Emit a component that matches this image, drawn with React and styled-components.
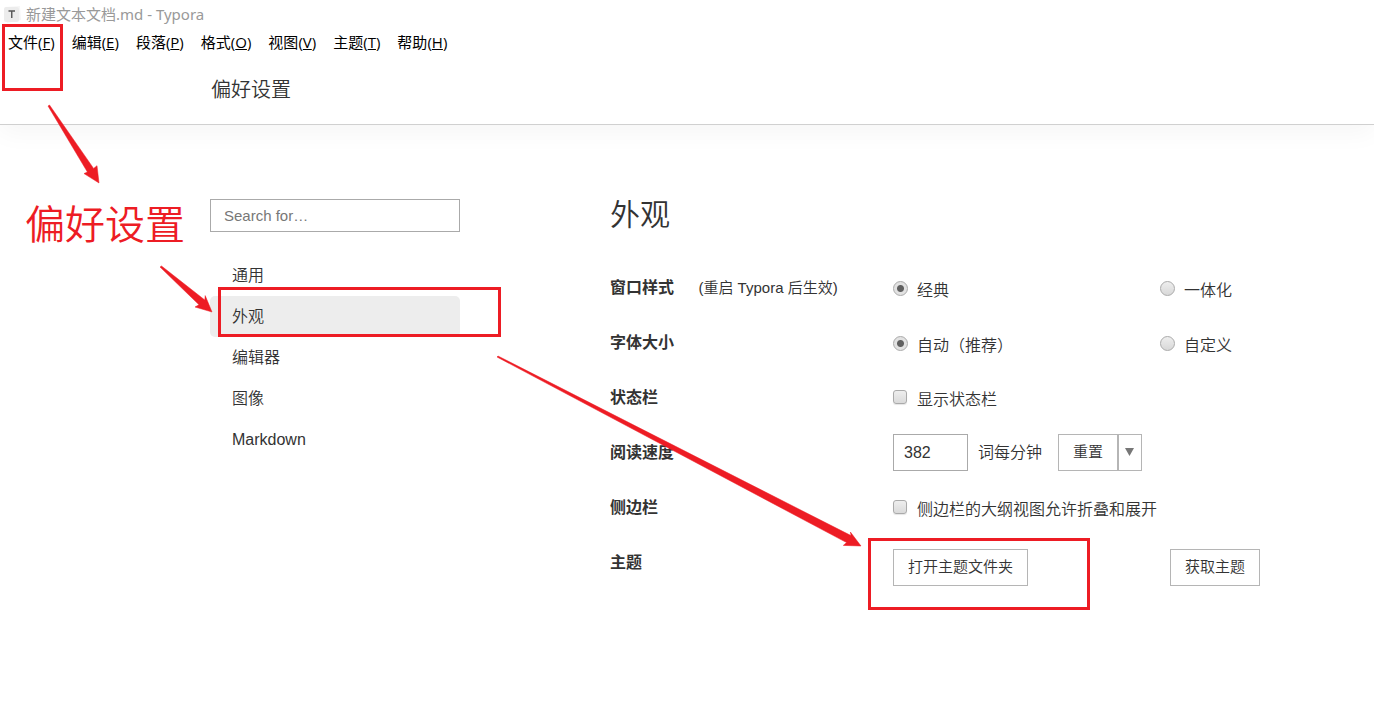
import React from "react";
import styled, { createGlobalStyle } from "styled-components";

const menus = [
  { label: "文件", accessKey: "F" },
  { label: "编辑", accessKey: "E" },
  { label: "段落", accessKey: "P" },
  { label: "格式", accessKey: "O" },
  { label: "视图", accessKey: "V" },
  { label: "主题", accessKey: "T" },
  { label: "帮助", accessKey: "H" },
];

const sections = ["通用", "外观", "编辑器", "图像", "Markdown"];

const App = () => {
  const [section, setSection] = React.useState("外观");

  return (
    <Window>
      <GlobalStyle />
      <Header>
        <TitleBar>
          <AppIcon viewBox="0 0 18 18" aria-hidden="true">
            <path d="M2 2 L17 1 L18 15 L4 18 Z" fill="#f6f6f6" />
            <rect x="1" y="2" width="15" height="15" rx="2" fill="#ececec" />
            <path
              d="M5.5 6 H12 M8.75 6 V13"
              fill="none"
              stroke="#555"
              strokeWidth="1.4"
            />
          </AppIcon>
          <span>新建文本文档.md - Typora</span>
        </TitleBar>
        <MenuBar>
          {menus.map((menu) => (
            <MenuButton key={menu.accessKey} type="button">
              {menu.label}(<u>{menu.accessKey}</u>)
            </MenuButton>
          ))}
        </MenuBar>
        <PageTitle>偏好设置</PageTitle>
      </Header>

      <Body>
        <Sidebar>
          <Search type="text" placeholder="Search for…" aria-label="Search" />
          <Nav>
            {sections.map((name) => (
              <NavLink
                key={name}
                href="#"
                $active={name === section}
                onClick={() => setSection(name)}
              >
                {name}
              </NavLink>
            ))}
          </Nav>
        </Sidebar>

        <Main>
          <Heading>外观</Heading>
          <Row>
            <RowLabel>
              窗口样式 <Hint>(重启 Typora 后生效)</Hint>
            </RowLabel>
            <RadioOption>
              <Radio type="radio" name="windowStyle" defaultChecked />
              <OptionText>经典</OptionText>
            </RadioOption>
            <RadioOption>
              <Radio type="radio" name="windowStyle" />
              <OptionText>一体化</OptionText>
            </RadioOption>
          </Row>
          <Row>
            <RowLabel>字体大小</RowLabel>
            <RadioOption>
              <Radio type="radio" name="fontSize" defaultChecked />
              <OptionText>自动（推荐）</OptionText>
            </RadioOption>
            <RadioOption>
              <Radio type="radio" name="fontSize" />
              <OptionText>自定义</OptionText>
            </RadioOption>
          </Row>
          <Row $wide>
            <RowLabel>状态栏</RowLabel>
            <Option>
              <Checkbox type="checkbox" />
              <OptionText>显示状态栏</OptionText>
            </Option>
          </Row>
          <Row $wide>
            <RowLabel>阅读速度</RowLabel>
            <Speed>
              <SpeedInput id="speed" type="text" defaultValue="382" />
              <label htmlFor="speed">词每分钟</label>
              <ButtonGroup>
                <Button type="button">重置</Button>
                <ArrowButton type="button" aria-label="更多">
                  <svg width="9" height="8" viewBox="0 0 9 8">
                    <path d="M0 0 H9 L4.5 8 Z" fill="#777" />
                  </svg>
                </ArrowButton>
              </ButtonGroup>
            </Speed>
          </Row>
          <Row $wide>
            <RowLabel>侧边栏</RowLabel>
            <Option>
              <Checkbox type="checkbox" />
              <OptionText>侧边栏的大纲视图允许折叠和展开</OptionText>
            </Option>
          </Row>
          <Row $wide>
            <RowLabel>主题</RowLabel>
            <ThemeActions>
              <Button type="button">打开主题文件夹</Button>
              <Button type="button">获取主题</Button>
            </ThemeActions>
          </Row>
        </Main>
      </Body>

      <Marks>
        <Arrows aria-hidden="true">
          <path d="M48 106 L49.5 105 L93.6 168.4 L97 165.7 L99 183 L84 173.6 L87.4 172 Z" />
          <path d="M160 267 L161.5 266 L204.8 300 L205.2 295.6 L212 312 L195 307 L199 304.8 Z" />
          <path d="M497 357 L498 356 L851 535.6 L850.4 532 L861 546 L843.3 545.4 L846.6 542.6 Z" />
        </Arrows>
        <Frame $x={2} $y={24} $w={61} $h={67} />
        <Frame $x={218} $y={287} $w={283} $h={50} />
        <Frame $x={868} $y={538} $w={222} $h={72} />
        <Note>偏好设置</Note>
      </Marks>
    </Window>
  );
};

const GlobalStyle = createGlobalStyle`
  * {
    box-sizing: border-box;
  }
  body {
    margin: 0;
    background: #fff;
    color: #333;
    font: 16px/24px "Liberation Sans", "Noto Sans CJK SC", sans-serif;
  }
  button,
  input {
    font: inherit;
    color: inherit;
  }
`;

const Window = styled.div`
  position: relative;
  min-height: 100vh;
  overflow: hidden;
`;

const Header = styled.header`
  height: 125px;
  border-bottom: 1px solid #d0d0d0;
  box-shadow: 0 8px 24px rgba(0, 0, 0, 0.04);
`;

const TitleBar = styled.div`
  display: flex;
  align-items: center;
  gap: 5px;
  height: 28px;
  padding-left: 3px;
  color: #999;
  font-family: "Noto Sans", "Noto Sans CJK SC", sans-serif;
  font-size: 15px;
  font-weight: 400;
`;

const AppIcon = styled.svg`
  width: 18px;
  height: 18px;
`;

const MenuBar = styled.nav`
  display: flex;
  gap: 17px;
  height: 28px;
  padding-left: 8px;
`;

const MenuButton = styled.button`
  padding: 0;
  border: 0;
  background: none;
  color: #000;
  font-family: "Open Sans", "Noto Sans CJK SC", sans-serif;
  font-size: 15px;
  font-weight: 400;
  line-height: 22px;
`;

const PageTitle = styled.h1`
  margin: 18px 0 0 211px;
  font-size: 20px;
  font-weight: 350;
  line-height: 32px;
`;

const Body = styled.div`
  display: flex;
  gap: 150px;
  padding: 74px 40px 40px 210px;
`;

const Sidebar = styled.aside`
  flex: 0 0 250px;
`;

const Search = styled.input`
  width: 100%;
  height: 33px;
  padding: 0 13px;
  border: 1px solid #aaa;
  border-radius: 0;
  background: #fff;
  font-size: 15px;
  &::placeholder {
    color: #777;
  }
`;

const Nav = styled.nav`
  margin-top: 23px;
`;

const NavLink = styled.a`
  display: block;
  padding-left: 22px;
  border-radius: 5px;
  background: ${(props) => (props.$active ? "#ededed" : "transparent")};
  color: #333;
  font-weight: 350;
  line-height: 41px;
  text-decoration: none;
`;

const Main = styled.main`
  flex: 1;
  min-width: 0;
`;

const Heading = styled.h2`
  margin: 0 0 29px;
  font-size: 30px;
  font-weight: 350;
  line-height: 32px;
`;

const Row = styled.div`
  display: grid;
  grid-template-columns: ${(props) =>
    props.$wide ? "283px 1fr" : "283px 267px 1fr"};
  align-items: center;
  height: 55px;
`;

const RowLabel = styled.div`
  font-weight: 700;
  white-space: nowrap;
`;

const Hint = styled.span`
  margin-left: 20px;
  font-size: 15px;
  font-weight: 350;
`;

const Option = styled.label`
  display: flex;
  align-items: center;
  gap: 9px;
`;

const RadioOption = styled(Option)`
  padding-top: 2px;
`;

const OptionText = styled.span`
  padding-top: 4px;
  font-weight: 350;
`;

const Radio = styled.input`
  appearance: none;
  width: 15px;
  height: 15px;
  margin: 0;
  border: 1px solid #aaa;
  border-radius: 50%;
  background: linear-gradient(#eee, #d8d8d8);
  &:checked {
    background: radial-gradient(circle, #606060 3px, #e2e2e2 4px);
  }
`;

const Checkbox = styled.input`
  appearance: none;
  width: 14px;
  height: 14px;
  margin: 0 1px 2px 0;
  border: 1px solid #aaa;
  border-radius: 3px;
  background: linear-gradient(#eee, #dadada);
  box-shadow: 0 1px 1px rgba(0, 0, 0, 0.1);
  &:checked {
    background: #606060;
  }
`;

const Speed = styled.div`
  display: flex;
  align-items: center;
  gap: 10px;
  font-weight: 350;
`;

const SpeedInput = styled.input`
  width: 75px;
  height: 37px;
  padding: 0 10px;
  border: 1px solid #aaa;
  border-radius: 0;
  background: #fff;
`;

const Button = styled.button`
  height: 37px;
  padding: 0 14px 2px;
  border: 1px solid #b5b5b5;
  background: #fff;
  font-size: 15px;
  font-weight: 350;
  white-space: nowrap;
`;

const ButtonGroup = styled.div`
  display: flex;
  margin-left: 6px;
`;

const ArrowButton = styled(Button)`
  display: flex;
  align-items: center;
  justify-content: center;
  width: 24px;
  padding: 0 1px 2px 0;
`;

const ThemeActions = styled.div`
  display: grid;
  grid-template-columns: 277px 1fr;
  justify-items: start;
  padding-top: 10px;
`;

// red annotations drawn on top of the window
const Marks = styled.div`
  position: absolute;
  inset: 0;
  color: #ed1c24;
  pointer-events: none;
`;

const Arrows = styled.svg`
  width: 100%;
  height: 100%;
  fill: currentColor;
  stroke: currentColor;
  stroke-width: 0.5;
`;

const Frame = styled.div`
  position: absolute;
  left: ${(props) => props.$x}px;
  top: ${(props) => props.$y}px;
  width: ${(props) => props.$w}px;
  height: ${(props) => props.$h}px;
  border: 3px solid currentColor;
`;

const Note = styled.div`
  position: absolute;
  left: 25px;
  top: 201px;
  font-size: 40px;
  font-weight: 350;
  line-height: 48px;
`;

export default App;
